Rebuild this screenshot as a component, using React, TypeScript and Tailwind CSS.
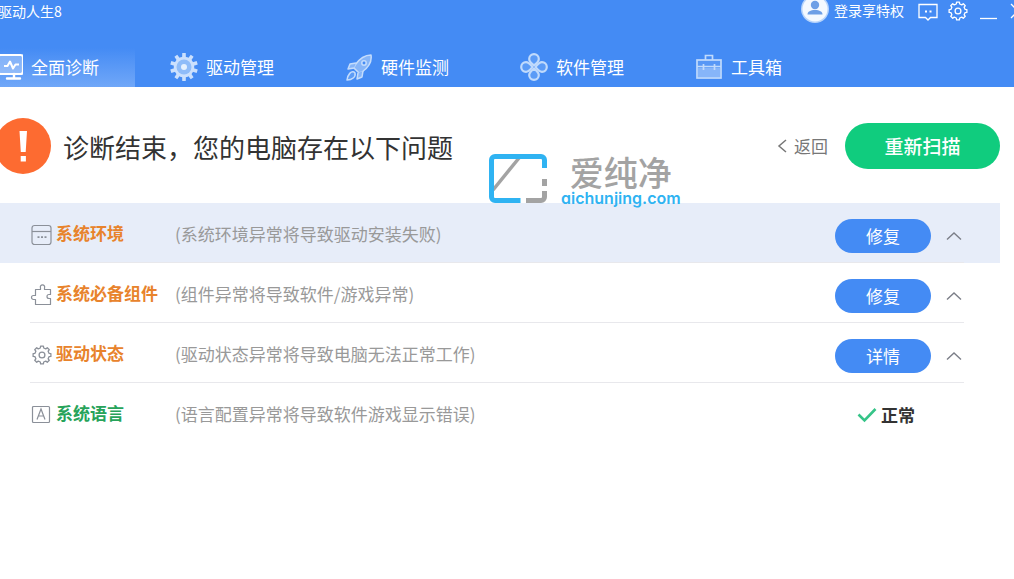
import { useState } from "react";
import type { FC, ReactNode } from "react";
import clsx from "clsx";

interface IconProps {
  className?: string;
}

const gearPath = (c: number, outer: number, inner: number, teeth: number) => {
  const step = (Math.PI * 2) / teeth;
  const points: string[] = [];
  for (let i = 0; i < teeth; i++) {
    const a = i * step - Math.PI / 2;
    [
      [inner, -0.3],
      [outer, -0.2],
      [outer, 0.2],
      [inner, 0.3],
    ].forEach(([r, k]) => {
      const x = c + r * Math.cos(a + k * step);
      const y = c + r * Math.sin(a + k * step);
      points.push(`${x.toFixed(2)} ${y.toFixed(2)}`);
    });
  }
  return `M${points.join("L")}Z`;
};

const MonitorIcon: FC = () => (
  <svg viewBox="0 0 28 28" className="size-7" fill="none" stroke="currentColor">
    <rect x="3" y="2" width="25" height="19" rx="2.5" strokeWidth="2.2" fill="#ffffff" fillOpacity="0.3" />
    <path d="M9 13h3.500l2.500-4.500 3 7 2.500-4H24" strokeWidth="2" strokeLinejoin="round" />
    <path d="M19 21v4M12 25.500h13" strokeWidth="2.4" strokeLinecap="round" />
  </svg>
);

const GearFilledIcon: FC = () => (
  <svg viewBox="0 0 28 28" className="size-7" fill="none">
    <path d={gearPath(14, 14, 10, 10)} fill="#cbe0fd" strokeLinejoin="round" />
    <circle cx="14" cy="14" r="10.300" fill="#cbe0fd" />
    <circle cx="14" cy="14" r="7.500" fill="#8fbcf9" />
    <circle cx="14" cy="14" r="3" fill="#e6f1fe" />
  </svg>
);

const RocketIcon: FC = () => (
  <svg viewBox="0 0 28 28" className="size-7" stroke="#c4dcfc" strokeWidth="1.5" strokeLinejoin="round" fill="#86b5f8">
    <path d="M26 2c-6 0-11 3-16 10l-1 3 5 5 3-1c7-5 10-11 9-17Z" />
    <path d="M11 10 5 11l-2 5 6-1M18 18l-1 6-5 2 1-6" />
    <path d="M9 19c-3-1-6 2-7 8 5 0 9-3 8-7Z" fill="#5d9cf6" />
    <circle cx="19" cy="10" r="2.2" fill="#448bf4" />
  </svg>
);

const CloverIcon: FC = () => (
  <svg viewBox="0 0 28 28" className="size-7" stroke="#c0dafc" strokeWidth="2.2" fill="#5b9bf6">
    {[0, 90, 180, 270].map((angle) => (
      <path
        key={angle}
        d="M14 12.5C11.500 10.500 9.200 8.800 9.200 6a4.800 4.800 0 0 1 9.600 0c0 2.800-2.300 4.500-4.800 6.500Z"
        strokeLinejoin="round"
        transform={`rotate(${angle} 14 14)`}
      />
    ))}
  </svg>
);

const ToolboxIcon: FC = () => (
  <svg viewBox="0 0 28 28" className="size-7" stroke="#c0dafc" strokeWidth="1.7" fill="none">
    <rect x="2" y="7" width="24" height="18" fill="#5797f5" />
    <path d="M3 15h22v9H3z" fill="#86b5f9" stroke="none" />
    <path d="M10.500 7V2.500h7V7M2 13.500h24M8.500 11v6M19.500 11v6" />
  </svg>
);

const GearIcon: FC<IconProps> = ({ className }) => (
  <svg viewBox="0 0 20 20" className={className} fill="none" stroke="currentColor" strokeWidth="1.3" strokeLinejoin="round">
    <path d={gearPath(10, 9, 7.2, 8)} />
    <circle cx="10" cy="10" r="2.900" />
  </svg>
);

const WindowIcon: FC = () => (
  <svg viewBox="0 0 22 22" className="size-[22px]" fill="none" stroke="currentColor" strokeWidth="1.2">
    <rect x="2" y="1.500" width="19" height="19" rx="2.500" />
    <path d="M2 7.500h19" />
    <path d="M7.500 13.200h2M11 13.200h2M14.500 13.200h2" strokeWidth="1.800" />
  </svg>
);

const PuzzleIcon: FC = () => (
  <svg viewBox="0 0 22 22" className="size-[22px]" fill="none" stroke="currentColor" strokeWidth="1.200" strokeLinejoin="round">
    <path d="M5.500 5.500h5V4a2.200 2.200 0 1 1 4 0v1.500h6v5H19a2 2 0 1 0 0 4h1.500v6h-15v-5h-2a2 2 0 1 1 0-4h2Z" />
  </svg>
);

const LanguageIcon: FC = () => (
  <svg viewBox="0 0 22 22" className="size-[22px]" fill="none" stroke="currentColor" strokeWidth="1.200">
    <rect x="2.500" y="2.500" width="17" height="16" rx="1" />
    <path d="m7 15.500 4-10.500 4 10.500M8.300 12h5.400" />
  </svg>
);

const AvatarIcon: FC = () => (
  <svg viewBox="0 0 28 28" className="size-7">
    <circle cx="14" cy="14" r="14" fill="#b7d4fb" />
    <circle cx="14" cy="14" r="12.500" fill="#f4f9ff" />
    <circle cx="14" cy="10" r="4.200" fill="#6d9fe6" />
    <path d="M6.500 19.500c0-3 3-4.500 7.500-4.500s7.500 1.500 7.500 4.500Z" fill="#6d9fe6" />
  </svg>
);

const ChevronUp: FC = () => (
  <svg viewBox="0 0 16 10" className="h-[10px] w-4" fill="none" stroke="currentColor" strokeWidth="1.400">
    <path d="m1 8.500 7-6.500 7 6.500" />
  </svg>
);

const tabs: { label: string; icon: ReactNode }[] = [
  { label: "全面诊断", icon: <MonitorIcon /> },
  { label: "驱动管理", icon: <GearFilledIcon /> },
  { label: "硬件监测", icon: <RocketIcon /> },
  { label: "软件管理", icon: <CloverIcon /> },
  { label: "工具箱", icon: <ToolboxIcon /> },
];

interface Check {
  name: string;
  desc: string;
  icon: ReactNode;
  action?: string;
}

const checks: Check[] = [
  { name: "系统环境", desc: "(系统环境异常将导致驱动安装失败)", icon: <WindowIcon />, action: "修复" },
  { name: "系统必备组件", desc: "(组件异常将导致软件/游戏异常)", icon: <PuzzleIcon />, action: "修复" },
  { name: "驱动状态", desc: "(驱动状态异常将导致电脑无法正常工作)", icon: <GearIcon className="size-[22px] pl-[2px]" />, action: "详情" },
  { name: "系统语言", desc: "(语言配置异常将导致软件游戏显示错误)", icon: <LanguageIcon /> },
];

const Header: FC<{ active: number; onSelect: (index: number) => void }> = ({ active, onSelect }) => (
  <header className="overflow-hidden bg-[#448bf4] text-white">
    <div className="-mr-3 -ml-[2px] flex h-12 items-start justify-between">
      <span className="pt-px text-sm">驱动人生8</span>
      <div className="flex items-start">
        <button className="-mt-[5px] flex items-center gap-[5px] text-sm">
          <AvatarIcon />
          <span className="pt-[2px]">登录享特权</span>
        </button>
        <button aria-label="消息" className="ml-[14px] pt-[2px]">
          <svg viewBox="0 0 20 20" className="size-5" fill="none" stroke="currentColor" strokeWidth="1.300">
            <path d="M1 2.500h18v13h-6.500L10 18l-2.500-2.500H1Z" />
            <path d="M7 9.500h2M11.500 9.500h2" strokeWidth="2" />
          </svg>
        </button>
        <button aria-label="设置" className="ml-[10px] pt-px">
          <GearIcon className="size-5" />
        </button>
        <button aria-label="最小化" className="ml-3 pt-[2px]">
          <svg viewBox="0 0 18 18" className="size-[18px]" stroke="currentColor" strokeWidth="1.300">
            <path d="M0 16.500h17" />
          </svg>
        </button>
        <button aria-label="关闭" className="ml-3 pt-[2px]">
          <svg viewBox="0 0 16 18" className="h-[18px] w-4" stroke="currentColor" strokeWidth="1.300">
            <path d="m1 2 14 14M15 2 1 16" />
          </svg>
        </button>
      </div>
    </div>
    <nav className="-ml-10 flex">
      {tabs.map((tab, index) => (
        <button
          key={tab.label}
          onClick={() => onSelect(index)}
          className={clsx(
            "flex h-[39px] w-[175px] items-center gap-2 pb-px pl-[35px] text-[17px]",
            index === active && "bg-linear-to-b from-[#448bf4] to-[#70a7f8]"
          )}
        >
          {tab.icon}
          <span className="pb-px">{tab.label}</span>
        </button>
      ))}
    </nav>
  </header>
);

const CheckRow: FC<{ check: Check; highlighted: boolean; last: boolean }> = ({ check, highlighted, last }) => (
  <li className={clsx("mr-[14px] pr-9 pl-[30px]", highlighted && "bg-[#e7edf9]")}>
    <div className={clsx("flex h-[60px] items-center border-b", last ? "border-transparent" : "border-[#e8e8ec]")}>
      <span className="pt-1 text-[#8b9099]">{check.icon}</span>
      <h2
        className={clsx(
          "ml-1 w-[119px] text-[17px] font-bold whitespace-nowrap",
          check.action ? "text-[#e8832c]" : "text-[#27a35a]"
        )}
      >
        {check.name}
      </h2>
      <p className="flex-1 pt-[2px] text-[17px] whitespace-nowrap text-[#999999]">{check.desc}</p>
      {check.action ? (
        <div className="flex items-center pt-[7px] pr-[2px]">
          <button className="h-[34px] w-24 rounded-full bg-[#448bf4] text-[17px] text-white">{check.action}</button>
          <button aria-label="收起" className="ml-[15px] text-[#7c7f88]">
            <ChevronUp />
          </button>
        </div>
      ) : (
        <div className="flex items-center gap-1 pt-[5px] pr-[49px] text-[17px] font-bold text-[#333333]">
          <svg viewBox="0 0 20 16" className="h-4 w-5" fill="none" stroke="#36c488" strokeWidth="2.600">
            <path d="m1.500 7.500 6 6L18.500 2" />
          </svg>
          正常
        </div>
      )}
    </div>
  </li>
);

const Watermark: FC = () => (
  <div className="pointer-events-none absolute top-[154px] left-[489px] flex">
    <svg viewBox="0 0 58 50" className="h-[50px] w-[58px]" fill="none" strokeWidth="5">
      <path d="M4 36 30 4" stroke="#a3a3a3" strokeWidth="3.500" />
      <path d="M55.500 14V6a3.500 3.500 0 0 0-3.500-3.500H6A3.500 3.500 0 0 0 2.500 6v37A3.500 3.500 0 0 0 6 46.500h25.500" stroke="#2fb3f2" />
      <path d="M55.500 25v7M55.500 37v6a3.500 3.500 0 0 1-3.500 3.500H37" stroke="#a3a3a3" />
    </svg>
    <div className="ml-[14px] flex flex-col">
      <span className="text-center text-[34px] leading-9 font-medium text-[#a3a3a3]">爱纯净</span>
      <span className="font-[Inter,sans-serif] text-base leading-4 font-semibold text-[#2fb3f2] [font-feature-settings:'cv11']">
        aichunjing.com
      </span>
    </div>
  </div>
);

export default function App() {
  const [active, setActive] = useState(0);

  return (
    <div className="relative min-h-screen overflow-hidden bg-white font-['Noto_Sans_CJK_SC',sans-serif]">
      <Header active={active} onSelect={setActive} />
      <main>
        <div className="flex items-center pt-[31px] pr-[14px] pb-[29px]">
          <svg viewBox="0 0 56 56" className="-ml-[5px] size-14">
            <circle cx="28" cy="28" r="28" fill="#fd6b31" />
            <path d="M24.500 13h7.500l-1.300 21h-4.900ZM25.700 38h5.200v5.500h-5.200Z" fill="#ffffff" />
          </svg>
          <h1 className="ml-3 flex-1 text-[26px] text-[#333333]">诊断结束，您的电脑存在以下问题</h1>
          <button className="flex items-center gap-[7px] text-[17px] text-[#777777]">
            <svg viewBox="0 0 10 14" className="h-[14px] w-[10px]" fill="none" stroke="currentColor" strokeWidth="1.500">
              <path d="M9 1 2 7l7 6" />
            </svg>
            返回
          </button>
          <button className="ml-[17px] h-[46px] w-[155px] rounded-full bg-[#10cc7e] text-[19px] font-medium text-white">
            重新扫描
          </button>
        </div>
        <ul>
          {checks.map((check, index) => (
            <CheckRow key={check.name} check={check} highlighted={index === 0} last={index === checks.length - 1} />
          ))}
        </ul>
      </main>
      <Watermark />
    </div>
  );
}
